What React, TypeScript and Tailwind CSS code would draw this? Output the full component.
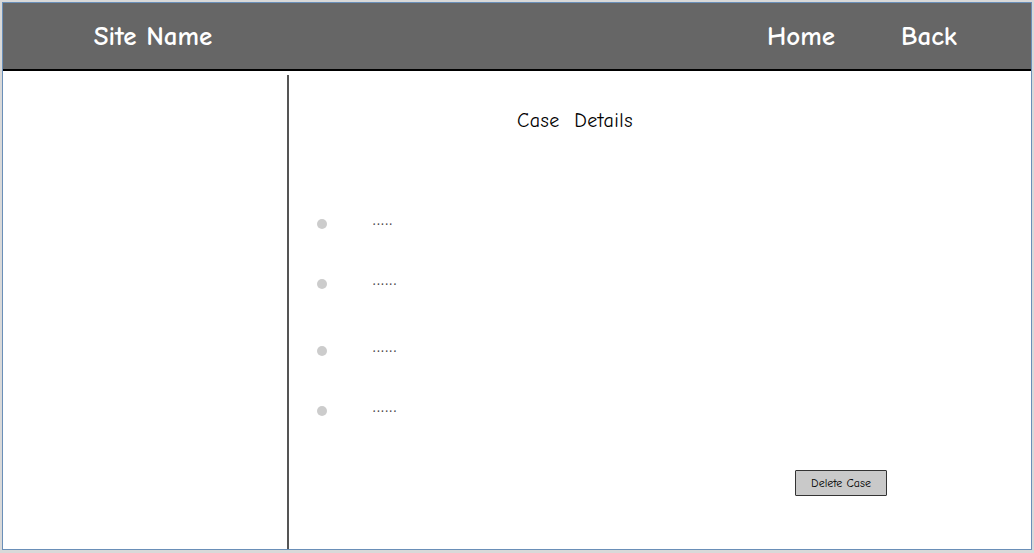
const font = { fontFamily: '"Comic Sans MS", "Comic Neue", Lato, "Open Sans", sans-serif' };

const ITEMS = [
  { text: '.....', gap: 'mt-[82px]' },
  { text: '......', gap: 'mt-[46px]' },
  { text: '......', gap: 'mt-[53px]' },
  { text: '......', gap: 'mt-[46px]' },
];

export default function App() {
  return (
    <div className="w-[1034px] h-[553px] bg-[#d9d9d9] pl-[2px] pt-[2px]" style={font}>
      <div className="w-[1030px] h-[548px] border border-[#6a8fb8] bg-white flex flex-col">
        {/* Header */}
        <header className="h-[68px] shrink-0 bg-[#666666] border-b-2 border-black flex items-center text-white text-[27px] font-bold">
          <div className="w-[300px] text-center pt-[2px]">Site Name</div>
          <div className="flex-1" />
          <nav className="flex items-center gap-[66px] pr-[74px] pt-[2px]">
            <span>Home</span>
            <span>Back</span>
          </nav>
        </header>

        <div className="flex-1 flex pt-[4px]">
          {/* Sidebar */}
          <aside className="w-[286px] shrink-0 border-r-2 border-[#555555]" />

          {/* Main */}
          <main className="flex-1 flex flex-col">
            <h1 className="pl-[228px] pt-[32px] text-[20px] leading-[28px] text-black tracking-wide">
              Case&nbsp; Details
            </h1>
            <ul className="flex flex-col">
              {ITEMS.map((it, i) => (
                <li key={i} className={`${it.gap} flex items-center h-[14px]`}>
                  <span className="ml-[28px] w-[10px] h-[10px] rounded-full bg-[#cccccc]" />
                  <span className="ml-[46px] text-[14px] tracking-[1.6px] font-bold text-[#444444] leading-none -mt-[6px]">{it.text}</span>
                </li>
              ))}
            </ul>
            <div className="mt-[52px] pl-[506px]">
              <button className="w-[92px] h-[26px] bg-[#c9c9c9] border border-[#333333] rounded-[1px] text-[12px] text-black">
                Delete Case
              </button>
            </div>
          </main>
        </div>
      </div>
    </div>
  );
}
